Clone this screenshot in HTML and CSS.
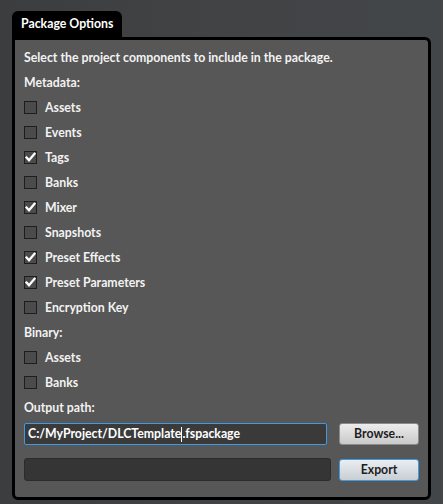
FILE: index.html
```html
<!DOCTYPE html>
<html>
<head>
<meta charset="utf-8">
<link rel="stylesheet" href="styles.css">
</head>
<body>
<div class="window">
  <div class="tab">Package Options</div>
  <div class="panel">
    <div class="intro">Select the project components to include in the package.</div>
    <div class="heading">Metadata:</div>
    <div class="check"><span class="box"></span>Assets</div>
    <div class="check"><span class="box"></span>Events</div>
    <div class="check"><span class="box"><svg viewBox="0 0 11 11" width="11" height="11"><polyline points="1.5,5.5 4,8.3 9.5,1.8"/></svg></span>Tags</div>
    <div class="check"><span class="box"></span>Banks</div>
    <div class="check"><span class="box"><svg viewBox="0 0 11 11" width="11" height="11"><polyline points="1.5,5.5 4,8.3 9.5,1.8"/></svg></span>Mixer</div>
    <div class="check"><span class="box"></span>Snapshots</div>
    <div class="check"><span class="box"><svg viewBox="0 0 11 11" width="11" height="11"><polyline points="1.5,5.5 4,8.3 9.5,1.8"/></svg></span>Preset Effects</div>
    <div class="check"><span class="box"><svg viewBox="0 0 11 11" width="11" height="11"><polyline points="1.5,5.5 4,8.3 9.5,1.8"/></svg></span>Preset Parameters</div>
    <div class="check"><span class="box"></span>Encryption Key</div>
    <div class="heading">Binary:</div>
    <div class="check"><span class="box"></span>Assets</div>
    <div class="check"><span class="box"></span>Banks</div>
    <div class="heading">Output path:</div>
    <div class="row">
      <div class="input">C:/MyProject/DLCTemplate<span class="caret"></span>.fspackage</div>
      <div class="btn">Browse...</div>
    </div>
    <div class="row row2">
      <div class="progress"></div>
      <div class="btn export">Export</div>
    </div>
  </div>
</div>
</body>
</html>
```

FILE: styles.css
```css
html, body {
  margin: 0;
  padding: 0;
  width: 443px;
  height: 504px;
  overflow: hidden;
}
body {
  background: linear-gradient(90deg, #3b3d3e 0%, #414345 50%, #434648 100%);
  font-family: Lato, "Open Sans", sans-serif;
  font-weight: bold;
  font-size: 12.3px;
  color: #f2f2f2;
}
.window {
  padding: 11px 12px 0 12px;
  width: 419px;
}
.tab {
  display: inline-block;
  white-space: nowrap;
  background: #000;
  color: #fff;
  height: 27px;
  line-height: 26px;
  padding: 0 9px;
  border-radius: 6px 6px 0 0;
  margin-bottom: -1px;
  vertical-align: top;
}
.panel {
  background: #575757;
  border: 3px solid #000;
  border-radius: 0 6px 6px 6px;
  height: 463px;
  box-sizing: border-box;
  padding: 8px 9px 0 9px;
}
.intro {
  height: 19px;
  line-height: 19px;
  margin-bottom: 6px;
}
.heading {
  height: 19px;
  line-height: 19px;
  margin-bottom: 6px;
}
.check {
  display: flex;
  align-items: center;
  height: 19px;
  margin-bottom: 6px;
}
.box {
  width: 11px;
  height: 11px;
  border: 1px solid #1e1e1e;
  background: #4b4b4b;
  margin-right: 8px;
  display: flex;
}
.box svg {
  display: block;
}
.box polyline {
  fill: none;
  stroke: #fff;
  stroke-width: 2.3;
  stroke-linecap: square;
  stroke-linejoin: miter;
}
.row {
  display: flex;
  align-items: center;
  margin-top: 1px;
}
.input {
  width: 298px;
  height: 20px;
  border: 1px solid #3d9be6;
  border-radius: 2px;
  background: #3a3a3a;
  line-height: 20px;
  padding-left: 3px;
  color: #fff;
  display: flex;
  align-items: center;
}
.caret {
  display: inline-block;
  width: 1px;
  height: 15px;
  background: #fff;
}
.btn {
  margin-left: auto;
  width: 78px;
  height: 20px;
  border: 1px solid #8a8a8a;
  border-radius: 3px;
  background: linear-gradient(#ececec, #c9c9c9);
  color: #1e1e1e;
  text-align: center;
  line-height: 20px;
}
.row2 {
  margin-top: 13px;
}
.progress {
  width: 307px;
  height: 23px;
  box-sizing: border-box;
  background: #353535;
  border: 1px solid #2b2b2b;
  border-radius: 3px;
}
.btn.export {
  border-color: #3d9be6;
  background: linear-gradient(#e9eef2, #c7ced4);
}
```
